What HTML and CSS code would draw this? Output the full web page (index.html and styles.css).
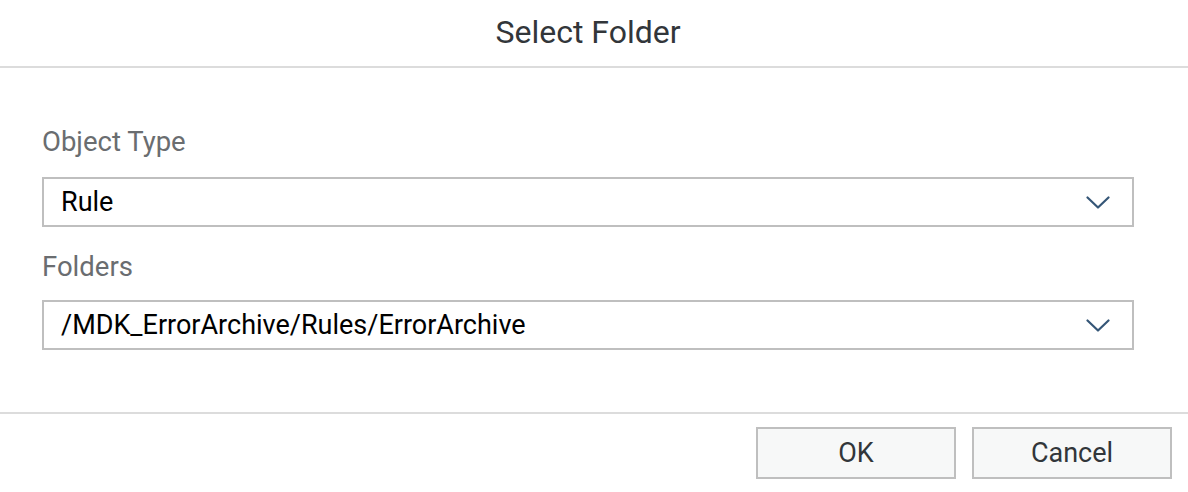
FILE: index.html
```html
<!DOCTYPE html>
<html>
<head>
<meta charset="utf-8">
<link rel="stylesheet" href="styles.css">
</head>
<body>
<div class="dialog">
  <header class="header"><h1 class="title">Select Folder</h1></header>
  <main class="content">
    <div class="field">
      <label class="label">Object Type</label>
      <div class="select">
        <span class="select-value">Rule</span>
        <svg class="chevron" width="24" height="13" viewBox="0 0 24 13"><path d="M1.5 1.5 L12 11.5 L22.5 1.5" fill="none" stroke="#355677" stroke-width="2.2" stroke-linecap="round" stroke-linejoin="round"/></svg>
      </div>
    </div>
    <div class="field field-second">
      <label class="label">Folders</label>
      <div class="select">
        <span class="select-value">/MDK_ErrorArchive/Rules/ErrorArchive</span>
        <svg class="chevron" width="24" height="13" viewBox="0 0 24 13"><path d="M1.5 1.5 L12 11.5 L22.5 1.5" fill="none" stroke="#355677" stroke-width="2.2" stroke-linecap="round" stroke-linejoin="round"/></svg>
      </div>
    </div>
  </main>
  <footer class="footer">
    <button class="btn">OK</button>
    <button class="btn">Cancel</button>
  </footer>
</div>
</body>
</html>
```
FILE: styles.css
```css
html, body {
  margin: 0;
  padding: 0;
  background: #ffffff;
}
body {
  font-family: Roboto, "Liberation Sans", sans-serif;
  color: #32363a;
}
.dialog {
  width: 1188px;
  height: 492px;
  display: flex;
  flex-direction: column;
  overflow: hidden;
}
.header {
  height: 68px;
  flex: none;
  box-sizing: border-box;
  border-bottom: 2px solid #dcdcdc;
  display: flex;
  align-items: center;
  justify-content: center;
  padding: 0 12px 3px 0;
}
.title {
  margin: 0;
  font-size: 32px;
  font-weight: 400;
  color: #32363a;
  line-height: 36px;
}
.content {
  flex: 1;
  padding: 58px 54px 0 42px;
}
.field {
  display: flex;
  flex-direction: column;
}
.field-second {
  margin-top: 24px;
}
.label {
  font-size: 27.5px;
  line-height: 32px;
  color: #6a6d70;
  margin-bottom: 19px;
}
.field-second .label {
  margin-bottom: 17px;
}
.select {
  height: 50px;
  box-sizing: border-box;
  border: 2px solid #bfbfbf;
  display: flex;
  align-items: center;
  padding: 0 22px 0 17px;
}
.select-value {
  flex: 1;
  font-size: 27px;
  color: #000000;
}
.chevron {
  display: block;
}
.footer {
  height: 80px;
  flex: none;
  box-sizing: border-box;
  border-top: 2px solid #dcdcdc;
  display: flex;
  justify-content: flex-end;
  align-items: flex-start;
  gap: 16px;
  padding: 13px 16px 0 0;
}
.btn {
  width: 200px;
  height: 52px;
  box-sizing: border-box;
  border: 2px solid #bfbfbf;
  background: #f7f8f8;
  color: #32363a;
  font-family: Roboto, "Liberation Sans", sans-serif;
  font-size: 27px;
  padding: 0;
}
```
